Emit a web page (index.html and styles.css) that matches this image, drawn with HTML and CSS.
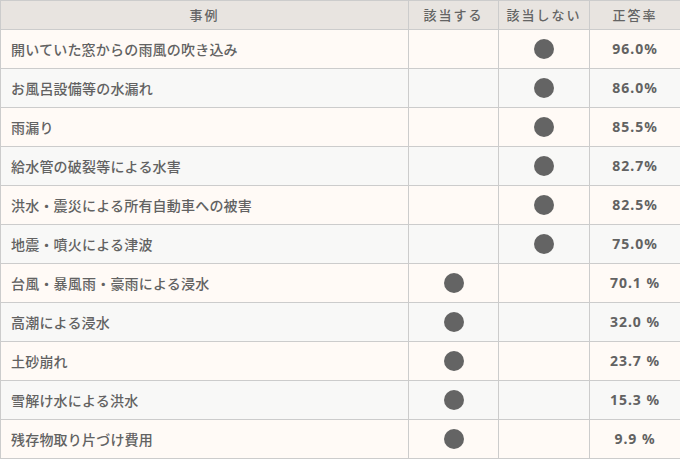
FILE: index.html
```html
<!DOCTYPE html>
<html lang="ja">
<head>
<meta charset="utf-8">
<link rel="stylesheet" href="styles.css">
</head>
<body>
<table class="quiz">
  <colgroup>
    <col class="c-case">
    <col class="c-yes">
    <col class="c-no">
    <col class="c-rate">
  </colgroup>
  <thead>
    <tr><th>事例</th><th>該当する</th><th>該当しない</th><th>正答率</th></tr>
  </thead>
  <tbody>
    <tr><td class="case">開いていた窓からの雨風の吹き込み</td><td></td><td class="mark"><span class="dot"></span></td><td class="rate">96.0%</td></tr>
    <tr><td class="case">お風呂設備等の水漏れ</td><td></td><td class="mark"><span class="dot"></span></td><td class="rate">86.0%</td></tr>
    <tr><td class="case">雨漏り</td><td></td><td class="mark"><span class="dot"></span></td><td class="rate">85.5%</td></tr>
    <tr><td class="case">給水管の破裂等による水害</td><td></td><td class="mark"><span class="dot"></span></td><td class="rate">82.7%</td></tr>
    <tr><td class="case">洪水・震災による所有自動車への被害</td><td></td><td class="mark"><span class="dot"></span></td><td class="rate">82.5%</td></tr>
    <tr><td class="case">地震・噴火による津波</td><td></td><td class="mark"><span class="dot"></span></td><td class="rate">75.0%</td></tr>
    <tr><td class="case">台風・暴風雨・豪雨による浸水</td><td class="mark"><span class="dot"></span></td><td></td><td class="rate">70.1 %</td></tr>
    <tr><td class="case">高潮による浸水</td><td class="mark"><span class="dot"></span></td><td></td><td class="rate">32.0 %</td></tr>
    <tr><td class="case">土砂崩れ</td><td class="mark"><span class="dot"></span></td><td></td><td class="rate">23.7 %</td></tr>
    <tr><td class="case">雪解け水による洪水</td><td class="mark"><span class="dot"></span></td><td></td><td class="rate">15.3 %</td></tr>
    <tr><td class="case">残存物取り片づけ費用</td><td class="mark"><span class="dot"></span></td><td></td><td class="rate">9.9 %</td></tr>
  </tbody>
</table>
</body>
</html>
```
FILE: styles.css
```css
html, body {
  margin: 0;
  padding: 0;
  background: #ffffff;
}
body {
  font-family: "Noto Sans CJK JP", "Noto Sans", sans-serif;
  color: #626262;
}
.quiz {
  width: 680px;
  border-collapse: collapse;
  table-layout: fixed;
}
.c-case { width: 408px; }
.c-yes { width: 90px; }
.c-no { width: 91px; }
.c-rate { width: 91px; }
.quiz th, .quiz td {
  border: 1px solid #cccccc;
  padding: 0;
}
.quiz th {
  background: #e8e4e0;
  height: 28px;
  font-size: 13px;
  font-weight: 500;
  letter-spacing: 2px;
  text-align: center;
  line-height: 28px;
  color: #646464;
}
.quiz td {
  height: 38px;
  line-height: 38px;
  vertical-align: middle;
}
.quiz tbody tr:nth-child(odd) td { background: #fffaf6; }
.quiz tbody tr:nth-child(even) td { background: #f8f8f7; }
.case {
  padding-left: 10px !important;
  font-size: 14px;
  font-weight: 500;
  letter-spacing: 0.2px;
}
.mark {
  text-align: center;
}
.dot {
  display: block;
  width: 20px;
  height: 20px;
  margin: 0 auto;
  border-radius: 50%;
  background: #646464;
}
.rate {
  text-align: center;
  font-family: "Noto Sans", sans-serif;
  font-weight: bold;
  font-size: 14px;
  letter-spacing: 1px;
}
```
